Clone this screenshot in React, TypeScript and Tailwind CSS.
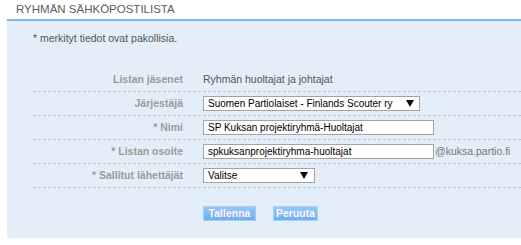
import React from 'react';

const Arrow = () => (
  <svg width="8" height="7" viewBox="0 0 8 7" className="shrink-0">
    <polygon points="0,0 8,0 4,7" fill="#111" />
  </svg>
);

function Row({label, children}: {label: string; children: React.ReactNode}) {
  return (
    <div className="flex h-[24px] items-center border-b border-dashed border-[#c4c8cc]">
      <div className="w-[150px] shrink-0 text-right text-[10.5px] font-bold text-[#9b9b9b]">{label}</div>
      <div className="flex items-center pl-[20px]">{children}</div>
    </div>
  );
}

export default function App() {
  const box = "flex h-[15px] items-center border border-[#a3a3a3] bg-white px-[4px] text-[10px] text-black";
  return (
    <div className="w-[521px] h-[245px] bg-white font-['Liberation_Sans',Arial,sans-serif] overflow-hidden">
      <div className="flex h-[19px] items-center pl-[16px] text-[11.5px] leading-none text-[#5c5c5c]">
        RYHMÄN SÄHKÖPOSTILISTA
      </div>
      <div className="ml-[7px] border-t-2 border-[#7ab6ef] bg-[#e4eef9] pt-[10px] pb-[17px]">
        <p className="pl-[26px] text-[10.5px] leading-[14px] text-[#555]">* merkityt tiedot ovat pakollisia.</p>

        <div className="ml-[26px] mt-[23px]">
          <Row label="Listan jäsenet">
            <span className="text-[10.5px] text-[#555]">Ryhmän huoltajat ja johtajat</span>
          </Row>
          <Row label="Järjestäjä">
            <div className={box + " w-[217px] justify-between pr-[5px]"}>
              <span>Suomen Partiolaiset - Finlands Scouter ry</span>
              <Arrow />
            </div>
          </Row>
          <Row label="* Nimi">
            <div className={box + " w-[231px]"}>SP Kuksan projektiryhmä-Huoltajat</div>
          </Row>
          <Row label="* Listan osoite">
            <div className={box + " w-[231px]"}>spkuksanprojektiryhma-huoltajat</div>
            <span className="pl-[1px] text-[10.5px] text-[#777]">@kuksa.partio.fi</span>
          </Row>
          <Row label="* Sallitut lähettäjät">
            <div className={box + " w-[112px] justify-between pr-[6px]"}>
              <span>Valitse</span>
              <Arrow />
            </div>
          </Row>
        </div>

        <div className="mt-[18px] flex gap-[17px] pl-[196px]">
          <button className="h-[15px] w-[53px] border border-[#a6cff5] bg-gradient-to-b from-[#92c9fb] to-[#6cb0f2] text-[10.5px] font-bold leading-none text-white [text-shadow:1px_0_0_rgba(170,130,220,0.6)]">
            Tallenna
          </button>
          <button className="h-[15px] w-[45px] border border-[#a6cff5] bg-gradient-to-b from-[#92c9fb] to-[#6cb0f2] text-[10.5px] font-bold leading-none text-white [text-shadow:1px_0_0_rgba(170,130,220,0.6)]">
            Peruuta
          </button>
        </div>
      </div>
    </div>
  );
}
